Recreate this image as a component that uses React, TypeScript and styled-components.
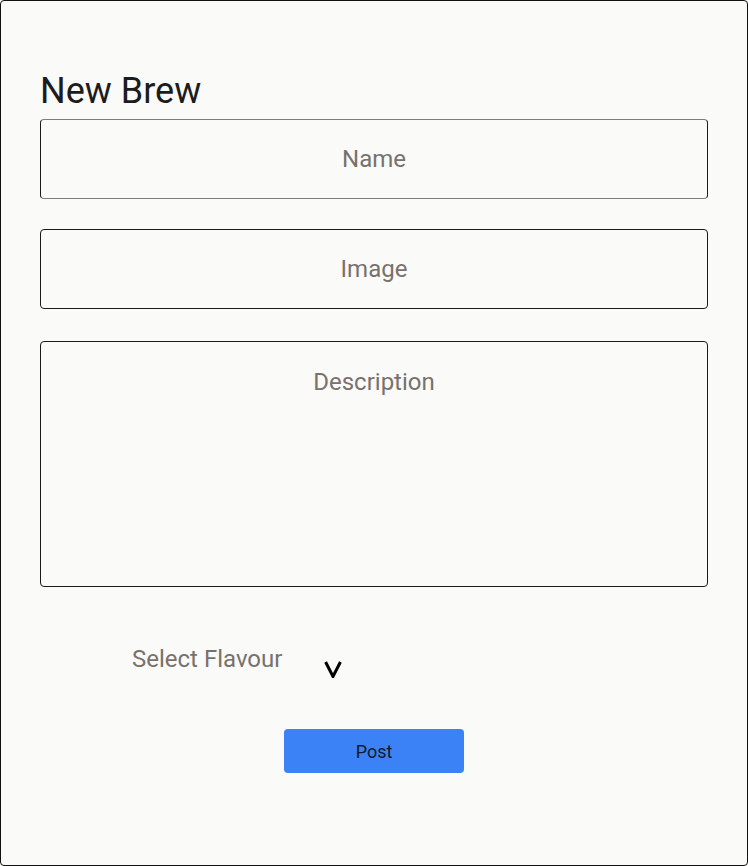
import React from 'react';
import styled, { createGlobalStyle } from 'styled-components';

const GlobalStyle = createGlobalStyle`
  html, body {
    margin: 0;
    padding: 0;
    background: #fafaf8;
  }
  * {
    box-sizing: border-box;
  }
`;

const App = () => {
  return (
    <>
      <GlobalStyle />
      <Page>
        <Title>New Brew</Title>
        <Form>
          <Field className="name" placeholder="Name" />
          <Field placeholder="Image" $gap={30} />
          <Description placeholder="Description" />
          <FlavourRow>
            <FlavourLabel>Select Flavour</FlavourLabel>
            <Chevron width="18" height="17" viewBox="0 0 18 17">
              <polyline points="1.6,1 9,15.5 16.4,1" fill="none" stroke="#000" strokeWidth="3" strokeLinejoin="miter" />
            </Chevron>
          </FlavourRow>
          <PostButton type="button">Post</PostButton>
        </Form>
      </Page>
    </>
  );
};

export default App;

const Page = styled.div`
  width: 748px;
  height: 866px;
  border: 1px solid #111;
  border-radius: 4px;
  background: #fafaf8;
  padding: 69px 39px 0;
  font-family: Roboto, 'Liberation Sans', sans-serif;
`;

const Title = styled.h1`
  margin: 0;
  font-size: 36px;
  line-height: 43px;
  font-weight: 400;
  color: #1c1c1c;
`;

const Form = styled.div`
  display: flex;
  flex-direction: column;
  margin-top: 6px;
`;

const Field = styled.input<{ $gap?: number }>`
  width: 668px;
  height: 80px;
  margin-top: ${(p) => p.$gap ?? 0}px;
  border: 1px solid #1a1a1a;
  border-radius: 4px;
  background: transparent;
  text-align: center;
  font-family: Roboto, 'Liberation Sans', sans-serif;
  font-size: 24px;
  outline: none;

  &.name {
    border-top-color: #7d7d7d;
    border-bottom-color: #7d7d7d;
  }
  &::placeholder {
    color: #78726d;
  }
`;

const Description = styled.textarea`
  width: 668px;
  height: 246px;
  margin-top: 32px;
  padding: 26px 10px 10px;
  border: 1px solid #1a1a1a;
  border-radius: 4px;
  background: transparent;
  text-align: center;
  font-family: Roboto, 'Liberation Sans', sans-serif;
  font-size: 24px;
  line-height: 28px;
  resize: none;
  outline: none;

  &::placeholder {
    color: #78726d;
  }
`;

const FlavourRow = styled.div`
  display: flex;
  align-items: flex-start;
  margin-top: 58px;
  padding-left: 92px;
  height: 37px;
`;

const FlavourLabel = styled.span`
  font-size: 24px;
  line-height: 28px;
  color: #78726d;
`;

const Chevron = styled.svg`
  margin-left: 42px;
  margin-top: 16px;
`;

const PostButton = styled.button`
  align-self: center;
  width: 180px;
  height: 44px;
  margin-top: 47px;
  border: none;
  border-radius: 4px;
  background: #3b82f6;
  color: #15192a;
  font-family: Roboto, 'Liberation Sans', sans-serif;
  font-size: 18px;
  cursor: pointer;
`;
